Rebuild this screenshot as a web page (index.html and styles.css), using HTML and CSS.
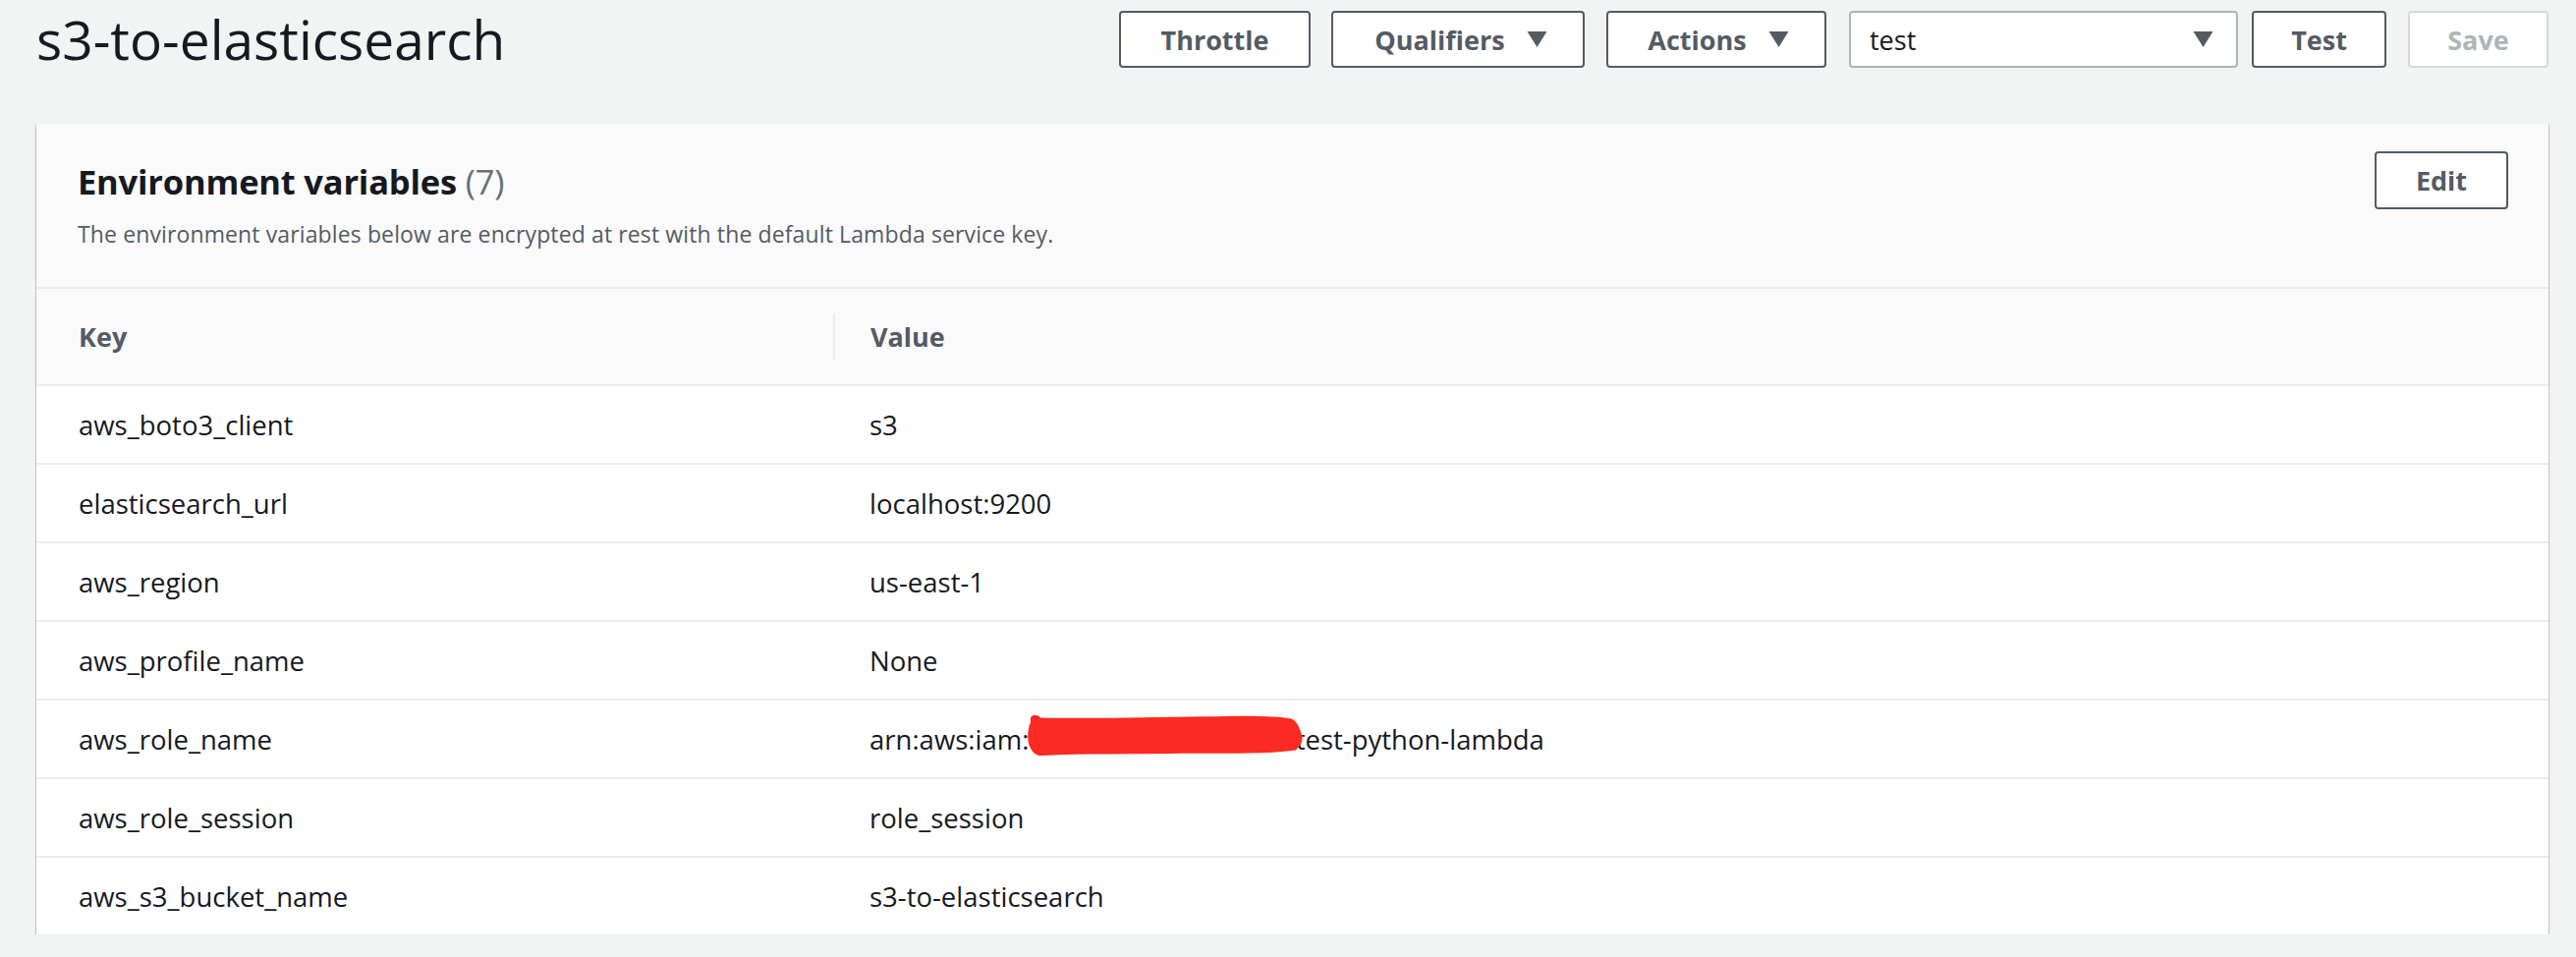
FILE: index.html
```html
<!DOCTYPE html>
<html lang="en">
<head>
<meta charset="utf-8">
<title>s3-to-elasticsearch</title>
<link rel="stylesheet" href="styles.css">
</head>
<body>
<div class="topbar">
  <h1 class="title">s3-to-elasticsearch</h1>
  <div class="actions">
    <button class="btn btn-throttle">Throttle</button>
    <button class="btn btn-qual">Qualifiers <svg class="caret" viewBox="0 0 20 16"><polygon points="0,0 20,0 10,16"/></svg></button>
    <button class="btn btn-actions">Actions <svg class="caret" viewBox="0 0 20 16"><polygon points="0,0 20,0 10,16"/></svg></button>
    <div class="select"><span>test</span><svg class="caret" viewBox="0 0 20 16"><polygon points="0,0 20,0 10,16"/></svg></div>
    <button class="btn btn-test">Test</button>
    <button class="btn btn-save" disabled>Save</button>
  </div>
</div>

<section class="panel">
  <div class="panel-head">
    <div class="head-text">
      <h2 class="panel-title">Environment variables <span class="count">(7)</span></h2>
      <p class="panel-desc">The environment variables below are encrypted at rest with the default Lambda service key.</p>
    </div>
    <button class="btn btn-edit">Edit</button>
  </div>
  <div class="table">
    <div class="row row-head">
      <div class="cell">Key</div>
      <div class="cell cell-value">Value</div>
    </div>
    <div class="row"><div class="cell">aws_boto3_client</div><div class="cell cell-value">s3</div></div>
    <div class="row"><div class="cell">elasticsearch_url</div><div class="cell cell-value">localhost:9200</div></div>
    <div class="row"><div class="cell">aws_region</div><div class="cell cell-value">us-east-1</div></div>
    <div class="row"><div class="cell">aws_profile_name</div><div class="cell cell-value">None</div></div>
    <div class="row"><div class="cell">aws_role_name</div><div class="cell cell-value">arn:aws:iam::<span class="redacted"><svg class="scribble" viewBox="0 0 280 40" preserveAspectRatio="none"><path d="M6,8 C4,1 12,0 16,4 C60,5 120,4 180,3 C220,2 250,2 268,5 C274,8 276,14 278,20 C280,26 276,30 272,34 C240,38 200,37 160,37 C110,38 60,37 18,39 C10,40 6,34 4,28 C2,20 4,12 6,8 Z"/></svg></span>test-python-lambda</div></div>
    <div class="row"><div class="cell">aws_role_session</div><div class="cell cell-value">role_session</div></div>
    <div class="row"><div class="cell">aws_s3_bucket_name</div><div class="cell cell-value">s3-to-elasticsearch</div></div>
  </div>
</section>
</body>
</html>
```

FILE: styles.css
```css
* { box-sizing: border-box; }

body {
  margin: 0;
  background: #f2f3f3;
  font-family: "Open Sans", "Noto Sans", Arial, sans-serif;
  color: #16191f;
}

.topbar {
  display: flex;
  align-items: center;
  padding: 11px 28px 0 37px;
}

.title {
  margin: 0;
  font-size: 55px;
  font-weight: 400;
  line-height: 58px;
  color: #16191f;
}

.actions {
  margin-left: auto;
  display: flex;
  align-items: center;
}

.btn {
  height: 58px;
  display: inline-flex;
  align-items: center;
  justify-content: center;
  background: #fff;
  border: 2px solid #545b64;
  border-radius: 4px;
  font-family: inherit;
  font-size: 27px;
  font-weight: 700;
  color: #545b64;
  padding: 0;
}

.caret {
  width: 21px;
  height: 16px;
  fill: #545b64;
  margin-left: 22px;
}

.btn-throttle { width: 195px; }
.btn-qual { width: 258px; margin-left: 21px; padding-left: 6px; }
.btn-actions { width: 224px; margin-left: 22px; padding-left: 4px; }

.select {
  margin-left: 23px;
  width: 396px;
  height: 58px;
  display: flex;
  align-items: center;
  justify-content: space-between;
  padding: 0 23px 0 19px;
  background: #fff;
  border: 2px solid #aab7b8;
  border-radius: 4px;
  font-size: 27px;
  color: #16191f;
}

.btn-test { width: 137px; margin-left: 14px; }
.btn-save {
  width: 143px;
  margin-left: 22px;
  border-color: #d5dbdb;
  color: #aab7b8;
}

.panel {
  margin: 57px 28px 0 37px;
  background: #fff;
  box-shadow: 0 1px 1px 0 rgba(0, 28, 36, 0.3), 1px 1px 1px 0 rgba(0, 28, 36, 0.15), -1px 1px 1px 0 rgba(0, 28, 36, 0.15);
}

.panel-head {
  display: flex;
  justify-content: space-between;
  align-items: flex-start;
  background: #fafafa;
  padding: 28px 41px 39px 42px;
}

.head-text { padding-top: 10px; }

.panel-title {
  margin: 0;
  font-size: 34.5px;
  font-weight: 700;
  line-height: 41px;
  color: #16191f;
  letter-spacing: -0.2px;
}

.count {
  font-weight: 400;
  color: #687078;
}

.panel-desc {
  margin: 18px 0 0;
  font-size: 23px;
  line-height: 30px;
  color: #545b64;
  letter-spacing: 0.12px;
}

.btn-edit { width: 136px; height: 59px; }

.row {
  display: grid;
  grid-template-columns: 811px 1fr;
  align-items: center;
  height: 80px;
  border-top: 2px solid #eaeded;
  font-size: 27.5px;
  color: #16191f;
}

.row-head {
  height: 99px;
  background: #fafafa;
  font-size: 27px;
  font-weight: 700;
  color: #545b64;
}

.cell { padding-left: 43px; white-space: nowrap; }

.cell-value { padding-left: 37px; }

.row-head .cell-value {
  border-left: 2px solid #eaeded;
  height: 48px;
  display: flex;
  align-items: center;
  padding-left: 36px;
}

.redacted {
  position: relative;
  display: inline-block;
  width: 264px;
  height: 1em;
  vertical-align: middle;
}

.scribble {
  position: absolute;
  left: -12px;
  top: -15px;
  width: 284px;
  height: 44px;
  fill: #fc2b21;
}
```
